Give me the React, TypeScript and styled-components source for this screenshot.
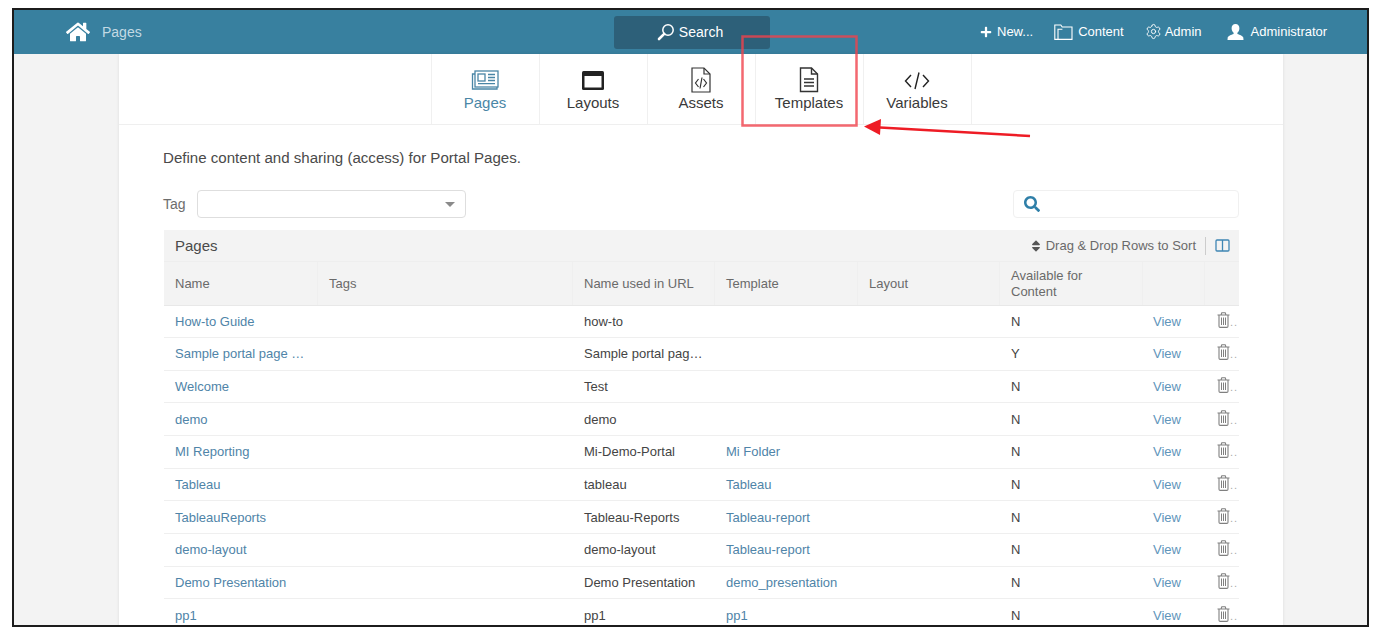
import React from 'react';
import styled, { createGlobalStyle } from 'styled-components';
import { FaHome, FaPlus, FaSearch, FaSort } from 'react-icons/fa';
import { Settings } from 'lucide-react';

const GlobalStyle = createGlobalStyle`
  html, body {
    margin: 0;
    padding: 0;
    height: 634px;
    overflow: hidden;
    background: #fff;
    font-family: "Liberation Sans", Arial, sans-serif;
  }
`;

const Frame = styled.div`
  box-sizing: border-box;
  position: relative;
  width: 1357px;
  height: 619px;
  margin: 8px 0 0 12px;
  border: 2px solid #1c1c1c;
  background: #f3f3f3;
  overflow: hidden;
`;

const Header = styled.header`
  display: grid;
  grid-template-columns: 600px 156px 1fr;
  height: 44px;
  background: #38809f;
  color: #fff;
`;

const Brand = styled.div`
  display: flex;
  align-items: center;
  gap: 12px;
  padding: 0 0 1px 52px;
  font-size: 14px;
  color: #c3dae4;
  svg { color: #fff; font-size: 24px; }
`;

const SearchButton = styled.div`
  display: flex;
  align-items: center;
  justify-content: center;
  gap: 4px;
  height: 33px;
  margin-top: 6px;
  padding: 0 4px 1px 0;
  box-sizing: border-box;
  border-radius: 3px;
  background: #2d6079;
  font-size: 14px;
`;

const HeaderMenu = styled.nav`
  display: flex;
  align-items: center;
  padding: 0 0 1px 210px;
  font-size: 13px;
`;

const MenuItem = styled.span<{ $gap: number; $after: number }>`
  display: flex;
  align-items: center;
  gap: ${(p) => p.$gap}px;
  margin-right: ${(p) => p.$after}px;
`;

const Panel = styled.main`
  width: 1164px;
  height: 575px;
  margin-left: 105px;
  background: #fff;
  box-shadow: 0 0 3px rgba(0, 0, 0, 0.1);
  overflow: hidden;
`;

const TabBar = styled.nav`
  display: flex;
  height: 70px;
  padding-left: 312px;
  border-bottom: 1px solid #efefef;
`;

const Tab = styled.div<{ $active?: boolean }>`
  box-sizing: border-box;
  display: flex;
  flex-direction: column;
  align-items: center;
  width: 108px;
  padding: 13px 1px 0 0;
  border-left: 1px solid #f0f0f0;
  color: ${(p) => (p.$active ? '#4a86a6' : '#3a3a3a')};
  font-size: 15px;
  &:last-child { width: 109px; border-right: 1px solid #f0f0f0; }
`;

const TabIcon = styled.svg`
  display: block;
  width: 30px;
  height: 26px;
  margin-bottom: 1px;
`;

const Content = styled.div`
  padding: 24px 44px 0;
`;

const Intro = styled.p`
  margin: 0 0 23px;
  font-size: 15.08px;
  line-height: 18px;
  color: #4a4a4a;
`;

const FilterRow = styled.div`
  display: flex;
  align-items: center;
  justify-content: space-between;
  height: 28px;
  margin-bottom: 12px;
`;

const TagFilter = styled.label`
  display: flex;
  align-items: center;
  gap: 11px;
  font-size: 14px;
  color: #6d6d6d;
`;

const TagSelect = styled.div`
  box-sizing: border-box;
  display: flex;
  align-items: center;
  justify-content: flex-end;
  width: 269px;
  height: 28px;
  padding-right: 10px;
  border: 1px solid #dedede;
  border-radius: 4px;
  &::after {
    content: '';
    border-left: 5.5px solid transparent;
    border-right: 5.5px solid transparent;
    border-top: 5.5px solid #8a8a8a;
  }
`;

const SearchBox = styled.div`
  box-sizing: border-box;
  display: flex;
  align-items: center;
  width: 226px;
  height: 28px;
  padding-left: 10px;
  border: 1px solid #f0f0f0;
  border-radius: 4px;
  color: #2f7fa8;
  font-size: 16px;
`;

const TableShell = styled.section`
  width: 1075px;
  margin-left: 1px;
  font-size: 13px;
`;

const TitleBar = styled.div`
  display: flex;
  align-items: center;
  justify-content: space-between;
  height: 32px;
  padding: 0 9px 0 11px;
  background: #f3f3f3;
  border-bottom: 1px solid #eee;
  box-sizing: border-box;
`;

const TableTitle = styled.h2`
  margin: 0;
  font-size: 15px;
  font-weight: 400;
  color: #4a4a4a;
`;

const TableTools = styled.div`
  display: flex;
  align-items: center;
  gap: 3px;
  color: #6a6a6a;
  font-size: 13px;
  svg { color: #555; }
`;

const ToolDivider = styled.span`
  width: 1px;
  height: 18px;
  margin: 0 6px 0 6px;
  background: #ccc;
`;

const columns = '154px 255px 142px 143px 142px 143px 62px 34px';

const HeadRow = styled.div`
  display: grid;
  grid-template-columns: ${columns};
  height: 43.5px;
  background: #f3f3f3;
  color: #6a6a6a;
  line-height: 16px;
  border-bottom: 1px solid #e8e8e8;
  box-sizing: border-box;
`;

const HeadCell = styled.div`
  display: flex;
  align-items: center;
  padding: 1px 11px 0;
  border-right: 1px solid #efefef;
  &:last-child { border-right: 0; }
`;

const Row = styled.div`
  display: grid;
  grid-template-columns: ${columns};
  align-items: center;
  box-sizing: border-box;
  height: 32.67px;
  border-bottom: 1px solid #efefef;
  color: #444;
`;

const Cell = styled.div`
  padding: 0 11px;
  white-space: nowrap;
`;

const LinkCell = styled(Cell)`
  color: #4f84a8;
`;

const ViewCell = styled(Cell)`
  padding-left: 10px;
  color: #5f95bb;
`;

const TrashCell = styled.div`
  display: flex;
  align-items: flex-end;
  padding: 0 0 0 12px;
  margin-top: -3px;
  color: #808080;
  overflow: hidden;
  span { color: #aaa; font-size: 11px; line-height: 12px; letter-spacing: 1px; }
`;

const Annotation = styled.svg`
  position: absolute;
  left: -14px;
  top: -10px;
  width: 1377px;
  height: 634px;
  pointer-events: none;
`;

type PageRow = { name: string; url: string; template?: string; available: 'Y' | 'N' };

const rows: PageRow[] = [
  { name: 'How-to Guide', url: 'how-to', available: 'N' },
  { name: 'Sample portal page …', url: 'Sample portal pag…', available: 'Y' },
  { name: 'Welcome', url: 'Test', available: 'N' },
  { name: 'demo', url: 'demo', available: 'N' },
  { name: 'MI Reporting', url: 'Mi-Demo-Portal', template: 'Mi Folder', available: 'N' },
  { name: 'Tableau', url: 'tableau', template: 'Tableau', available: 'N' },
  { name: 'TableauReports', url: 'Tableau-Reports', template: 'Tableau-report', available: 'N' },
  { name: 'demo-layout', url: 'demo-layout', template: 'Tableau-report', available: 'N' },
  { name: 'Demo Presentation', url: 'Demo Presentation', template: 'demo_presentation', available: 'N' },
  { name: 'pp1', url: 'pp1', template: 'pp1', available: 'N' },
];

const Magnifier = () => (
  <svg width="18" height="18" viewBox="0 0 18 18" fill="none" stroke="#fff">
    <circle cx="11" cy="7" r="5.2" strokeWidth="1.5" />
    <path d="M7.2 10.8 2 16" strokeWidth="2.6" strokeLinecap="round" />
  </svg>
);

const FolderIcon = () => (
  <svg width="19" height="16" viewBox="0 0 19 16" fill="none" stroke="#fff" strokeWidth="1.1">
    <path d="M4 15.4H.8V1h6l1.4 2H18v12.4H4V5.2h4.4" />
  </svg>
);

const UserIcon = () => (
  <svg width="17" height="16" viewBox="0 0 17 16" fill="#fff">
    <path d="M8.5 0C6 0 4.6 1.8 4.6 4.2c0 2 1 3.6 2 4.5v1.2c-2.4 1-5.6 1.7-5.9 3.6L.5 16h16l-.2-2.5c-.3-1.9-3.5-2.6-5.9-3.6V8.7c1-.9 2-2.5 2-4.5C12.4 1.8 11 0 8.5 0z" />
  </svg>
);

const ColumnsIcon = () => (
  <svg width="15" height="13" viewBox="0 0 15 13" fill="none" stroke="#3f86b4" strokeWidth="1.3">
    <rect x="1" y="1" width="13" height="11" rx="1" />
    <path d="M7.5 1v11" />
  </svg>
);

const TrashIcon = () => (
  <svg width="13" height="16" viewBox="0 0 13 16" fill="none" stroke="currentColor" strokeWidth="1.1">
    <path d="M.5 3h12M4 3 4.8.8h3.4L9 3M2 3v11.2c0 .7.5 1.2 1.2 1.2h6.6c.7 0 1.2-.5 1.2-1.2V3" />
    <path d="M4.5 5.500v7.500M6.500 5.500v7.500M8.500 5.500v7.500" strokeWidth="1" />
  </svg>
);

const tabs = [
  {
    label: 'Pages',
    active: true,
    icon: (
      <g fill="none" stroke="#4a86a6" strokeWidth="1.3">
        <rect x="5" y="4" width="23" height="16" />
        <path d="M5 7H2.500v15H27V20" />
        <rect x="8" y="7" width="7" height="7" />
        <path d="M18 7.500h7M18 10.500h7M18 13.500h7M8 16.700h17" />
      </g>
    ),
  },
  {
    label: 'Layouts',
    icon: (
      <g>
        <rect x="4" y="4" width="22" height="19" rx="1.500" fill="#222" />
        <rect x="6.500" y="9" width="17" height="11.500" fill="#fff" />
      </g>
    ),
  },
  {
    label: 'Assets',
    icon: (
      <g fill="none" stroke="#333" strokeWidth="1.2">
        <path d="M6 1h12l6 6v18H6z" />
        <path d="M18 1v6h6" />
        <path d="M12.500 12 9.500 16l3 4M17.500 12l3 4-3 4M16 10.500l-2 11" />
      </g>
    ),
  },
  {
    label: 'Templates',
    icon: (
      <g fill="none" stroke="#333" strokeWidth="1.4">
        <path d="M6.500 1h11l6 6v17.500h-17z" />
        <path d="M17.500 1v6h6" />
        <path d="M10 12h10M10 15.500h10M10 19h10" />
      </g>
    ),
  },
  {
    label: 'Variables',
    icon: (
      <g fill="none" stroke="#222" strokeWidth="1.400">
        <path d="M9 8 3.500 14 9 20M21 8l5.500 6L21 20M17 5.500 13 22" />
      </g>
    ),
  },
];

export default function App() {
  return (
    <>
      <GlobalStyle />
      <Frame>
        <Header>
          <Brand>
            <FaHome />
            Pages
          </Brand>
          <SearchButton>
            <Magnifier />
            Search
          </SearchButton>
          <HeaderMenu>
            <MenuItem $gap={5} $after={21}><FaPlus size={12} />New...</MenuItem>
            <MenuItem $gap={5} $after={21}><FolderIcon />Content</MenuItem>
            <MenuItem $gap={3} $after={25}><Settings size={17} strokeWidth={1.3} />Admin</MenuItem>
            <MenuItem $gap={7} $after={0}><UserIcon />Administrator</MenuItem>
          </HeaderMenu>
        </Header>
        <Panel>
          <TabBar>
            {tabs.map((t) => (
              <Tab key={t.label} $active={t.active}>
                <TabIcon viewBox="0 0 30 26">{t.icon}</TabIcon>
                {t.label}
              </Tab>
            ))}
          </TabBar>
          <Content>
            <Intro>Define content and sharing (access) for Portal Pages.</Intro>
            <FilterRow>
              <TagFilter>
                Tag
                <TagSelect />
              </TagFilter>
              <SearchBox>
                <FaSearch />
              </SearchBox>
            </FilterRow>
            <TableShell>
              <TitleBar>
                <TableTitle>Pages</TableTitle>
                <TableTools>
                  <FaSort size={14} />
                  Drag &amp; Drop Rows to Sort
                  <ToolDivider />
                  <ColumnsIcon />
                </TableTools>
              </TitleBar>
              <HeadRow>
                <HeadCell>Name</HeadCell>
                <HeadCell>Tags</HeadCell>
                <HeadCell>Name used in URL</HeadCell>
                <HeadCell>Template</HeadCell>
                <HeadCell>Layout</HeadCell>
                <HeadCell>Available for Content</HeadCell>
                <HeadCell />
                <HeadCell />
              </HeadRow>
              {rows.map((r) => (
                <Row key={r.name}>
                  <LinkCell>{r.name}</LinkCell>
                  <Cell />
                  <Cell>{r.url}</Cell>
                  <LinkCell>{r.template}</LinkCell>
                  <Cell />
                  <Cell>{r.available}</Cell>
                  <ViewCell>View</ViewCell>
                  <TrashCell>
                    <TrashIcon />
                    <span>..</span>
                  </TrashCell>
                </Row>
              ))}
            </TableShell>
          </Content>
        </Panel>
        <Annotation viewBox="0 0 1377 634">
          <rect x="742.500" y="36.500" width="114" height="89" fill="none" stroke="#f0424c" strokeOpacity="0.8" strokeWidth="2.500" />
          <path d="M1030 136 880 127.500" stroke="#ee1c25" strokeWidth="2.500" fill="none" />
          <path d="M864 126.500 881 119l-1 16z" fill="#ee1c25" />
        </Annotation>
      </Frame>
    </>
  );
}
